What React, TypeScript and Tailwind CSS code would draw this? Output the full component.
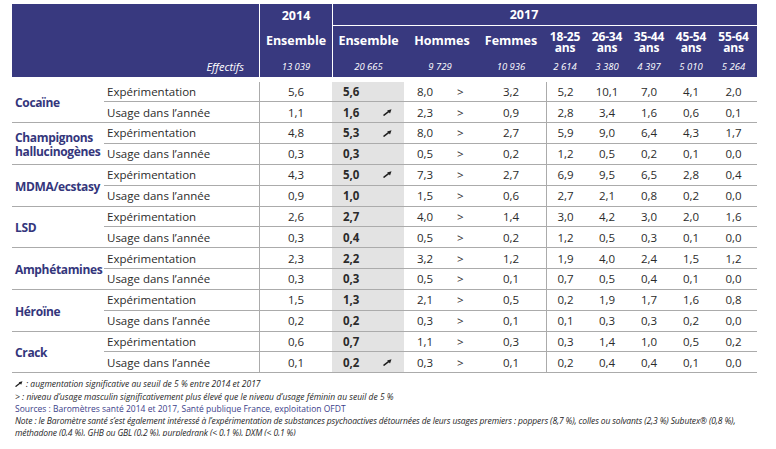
import React from 'react';

type Row = { v14: string; v17: string; up?: boolean; h: string; f: string; ages: string[] };
type Drug = { name: string[]; rows: [Row, Row] };

const DRUGS: Drug[] = [
  {
    name: ['Cocaïne'],
    rows: [
      { v14: '5,6', v17: '5,6', h: '8,0', f: '3,2', ages: ['5,2', '10,1', '7,0', '4,1', '2,0'] },
      { v14: '1,1', v17: '1,6', up: true, h: '2,3', f: '0,9', ages: ['2,8', '3,4', '1,6', '0,6', '0,1'] },
    ],
  },
  {
    name: ['Champignons', 'hallucinogènes'],
    rows: [
      { v14: '4,8', v17: '5,3', up: true, h: '8,0', f: '2,7', ages: ['5,9', '9,0', '6,4', '4,3', '1,7'] },
      { v14: '0,3', v17: '0,3', h: '0,5', f: '0,2', ages: ['1,2', '0,5', '0,2', '0,1', '0,0'] },
    ],
  },
  {
    name: ['MDMA/ecstasy'],
    rows: [
      { v14: '4,3', v17: '5,0', up: true, h: '7,3', f: '2,7', ages: ['6,9', '9,5', '6,5', '2,8', '0,4'] },
      { v14: '0,9', v17: '1,0', h: '1,5', f: '0,6', ages: ['2,7', '2,1', '0,8', '0,2', '0,0'] },
    ],
  },
  {
    name: ['LSD'],
    rows: [
      { v14: '2,6', v17: '2,7', h: '4,0', f: '1,4', ages: ['3,0', '4,2', '3,0', '2,0', '1,6'] },
      { v14: '0,3', v17: '0,4', h: '0,5', f: '0,2', ages: ['1,2', '0,5', '0,3', '0,1', '0,0'] },
    ],
  },
  {
    name: ['Amphétamines'],
    rows: [
      { v14: '2,3', v17: '2,2', h: '3,2', f: '1,2', ages: ['1,9', '4,0', '2,4', '1,5', '1,2'] },
      { v14: '0,3', v17: '0,3', h: '0,5', f: '0,1', ages: ['0,7', '0,5', '0,4', '0,1', '0,0'] },
    ],
  },
  {
    name: ['Héroïne'],
    rows: [
      { v14: '1,5', v17: '1,3', h: '2,1', f: '0,5', ages: ['0,2', '1,9', '1,7', '1,6', '0,8'] },
      { v14: '0,2', v17: '0,2', h: '0,3', f: '0,1', ages: ['0,1', '0,3', '0,3', '0,2', '0,0'] },
    ],
  },
  {
    name: ['Crack'],
    rows: [
      { v14: '0,6', v17: '0,7', h: '1,1', f: '0,3', ages: ['0,3', '1,4', '1,0', '0,5', '0,2'] },
      { v14: '0,1', v17: '0,2', up: true, h: '0,3', f: '0,1', ages: ['0,2', '0,4', '0,4', '0,1', '0,0'] },
    ],
  },
];

const AGES = ['18-25', '26-34', '35-44', '45-54', '55-64'];
const AGE_N = ['2 614', '3 380', '4 397', '5 010', '5 264'];

const UpArrow: React.FC<{ className?: string }> = ({ className }) => (
  <svg viewBox="0 0 10 8" className={className}>
    <path d="M1 7 L6.2 3" stroke="#1f1f1f" strokeWidth="1.7" strokeLinecap="round" />
    <path d="M9.6 0.4 L4.6 1.6 L7.9 5 Z" fill="#1f1f1f" />
  </svg>
);

const App: React.FC = () => {
  return (
    <div className="w-[776px] h-[449px] bg-white overflow-hidden font-['Open_Sans',sans-serif] text-[#2b2b2b]">
      <div className="ml-[12px] pt-[4px] w-[745px]">
        {/* header */}
        <div className="grid grid-cols-[92px_155px_73px_72px_72px_70px_42px_42px_42px_42px_43px] grid-rows-[22px_31px_20px] bg-[#38397f] text-white">
          <div className="col-span-2 row-span-2" />
          <div className="border-l border-white flex items-center justify-center font-bold text-[12.5px] pt-[2px]">2014</div>
          <div className="col-span-8 border-l border-b border-white flex items-center justify-center font-bold text-[12.5px] pr-[42px] pt-[2px]">2017</div>
          <div className="border-l border-white flex items-center justify-center font-bold text-[12.5px]">Ensemble</div>
          <div className="border-l border-white flex items-center justify-center font-bold text-[12.5px]">Ensemble</div>
          <div className="flex items-center justify-center font-bold text-[12.5px] pl-[4px]">Hommes</div>
          <div className="flex items-center justify-center font-bold text-[12.5px]">Femmes</div>
          {AGES.map(a => (
            <div key={a} className="flex flex-col items-center justify-center font-bold text-[12px] leading-[11px] pr-[4px] tracking-[-0.2px]">
              <span>{a}</span>
              <span>ans</span>
            </div>
          ))}
          <div className="col-span-2 flex items-center justify-end italic text-[11px] pr-[15px]">Effectifs</div>
          <div className="border-l border-white flex items-center justify-center italic text-[9.5px]">13 039</div>
          <div className="border-l border-white flex items-center justify-center italic text-[9.5px]">20 665</div>
          <div className="flex items-center justify-center italic text-[9.5px]">9 729</div>
          <div className="flex items-center justify-center italic text-[9.5px]">10 936</div>
          {AGE_N.map(n => (
            <div key={n} className="flex items-center justify-center italic text-[9.5px] pr-[4px]">{n}</div>
          ))}
        </div>

        {/* body */}
        <div className="mt-[4.5px] grid grid-cols-[92px_155px_73px_72px_72px_70px_42px_42px_42px_42px_43px] grid-rows-[repeat(14,20.85px)] text-[11.5px]">
          {DRUGS.map(d => (
            <React.Fragment key={d.name.join(' ')}>
              <div className="row-span-2 border-b border-[#ababab] flex flex-col justify-center pl-[3px] pt-[3px] font-bold text-[12px] tracking-[-0.35px] leading-[14px] text-[#34367c] whitespace-nowrap">
                {d.name.map(n => (
                  <span key={n}>{n}</span>
                ))}
              </div>
              {d.rows.map((r, i) => (
                <React.Fragment key={i}>
                  <div className="border-b border-[#ababab] flex items-center pl-[3px]">
                    {i === 0 ? 'Expérimentation' : 'Usage dans l’année'}
                  </div>
                  <div className="border-b border-l border-[#ababab] flex items-center justify-center">{r.v14}</div>
                  <div className="border-b border-[#ababab] bg-[#e3e3e3] flex items-center pl-[11px] font-bold">
                    <span className="w-[40px]">{r.v17}</span>
                    {r.up && <UpArrow className="w-[9px] h-[7px]" />}
                  </div>
                  <div className="border-b border-[#ababab] flex items-center pl-[13px]">
                    <span className="w-[40px]">{r.h}</span>
                    <span>&gt;</span>
                  </div>
                  <div className="border-b border-[#ababab] flex items-center justify-center">{r.f}</div>
                  {r.ages.map((a, j) => (
                    <div
                      key={j}
                      className={
                        j === 0
                          ? 'border-b border-l border-[#ababab] flex items-center justify-center pr-[4px]'
                          : 'border-b border-[#ababab] flex items-center justify-center pr-[4px]'
                      }
                    >
                      {a}
                    </div>
                  ))}
                </React.Fragment>
              ))}
            </React.Fragment>
          ))}
        </div>

        {/* notes */}
        <div className="mt-[5px] pl-[3px] h-[58px] overflow-hidden text-[8.5px] leading-[12.2px] text-[#262626] italic whitespace-nowrap">
          <div className="flex items-center gap-[3px]">
            <UpArrow className="w-[8px] h-[6px]" />
            <span>: augmentation significative au seuil de 5 % entre 2014 et 2017</span>
          </div>
          <div>&gt; : niveau d’usage masculin significativement plus élevé que le niveau d’usage féminin au seuil de 5 %</div>
          <div className="not-italic text-[#3b3e8a]">Sources : Baromètres santé 2014 et 2017, Santé publique France, exploitation OFDT</div>
          <div className="tracking-[-0.12px]">
            Note : le Baromètre santé s’est également intéressé à l’expérimentation de substances psychoactives détournées de leurs usages premiers : poppers (8,7 %), colles ou solvants (2,3 %) Subutex® (0,8 %),
          </div>
          <div className="tracking-[-0.12px]">méthadone (0,4 %), GHB ou GBL (0,2 %), purpledrank (&lt; 0,1 %), DXM (&lt; 0,1 %)</div>
        </div>
      </div>
    </div>
  );
};

export default App;
